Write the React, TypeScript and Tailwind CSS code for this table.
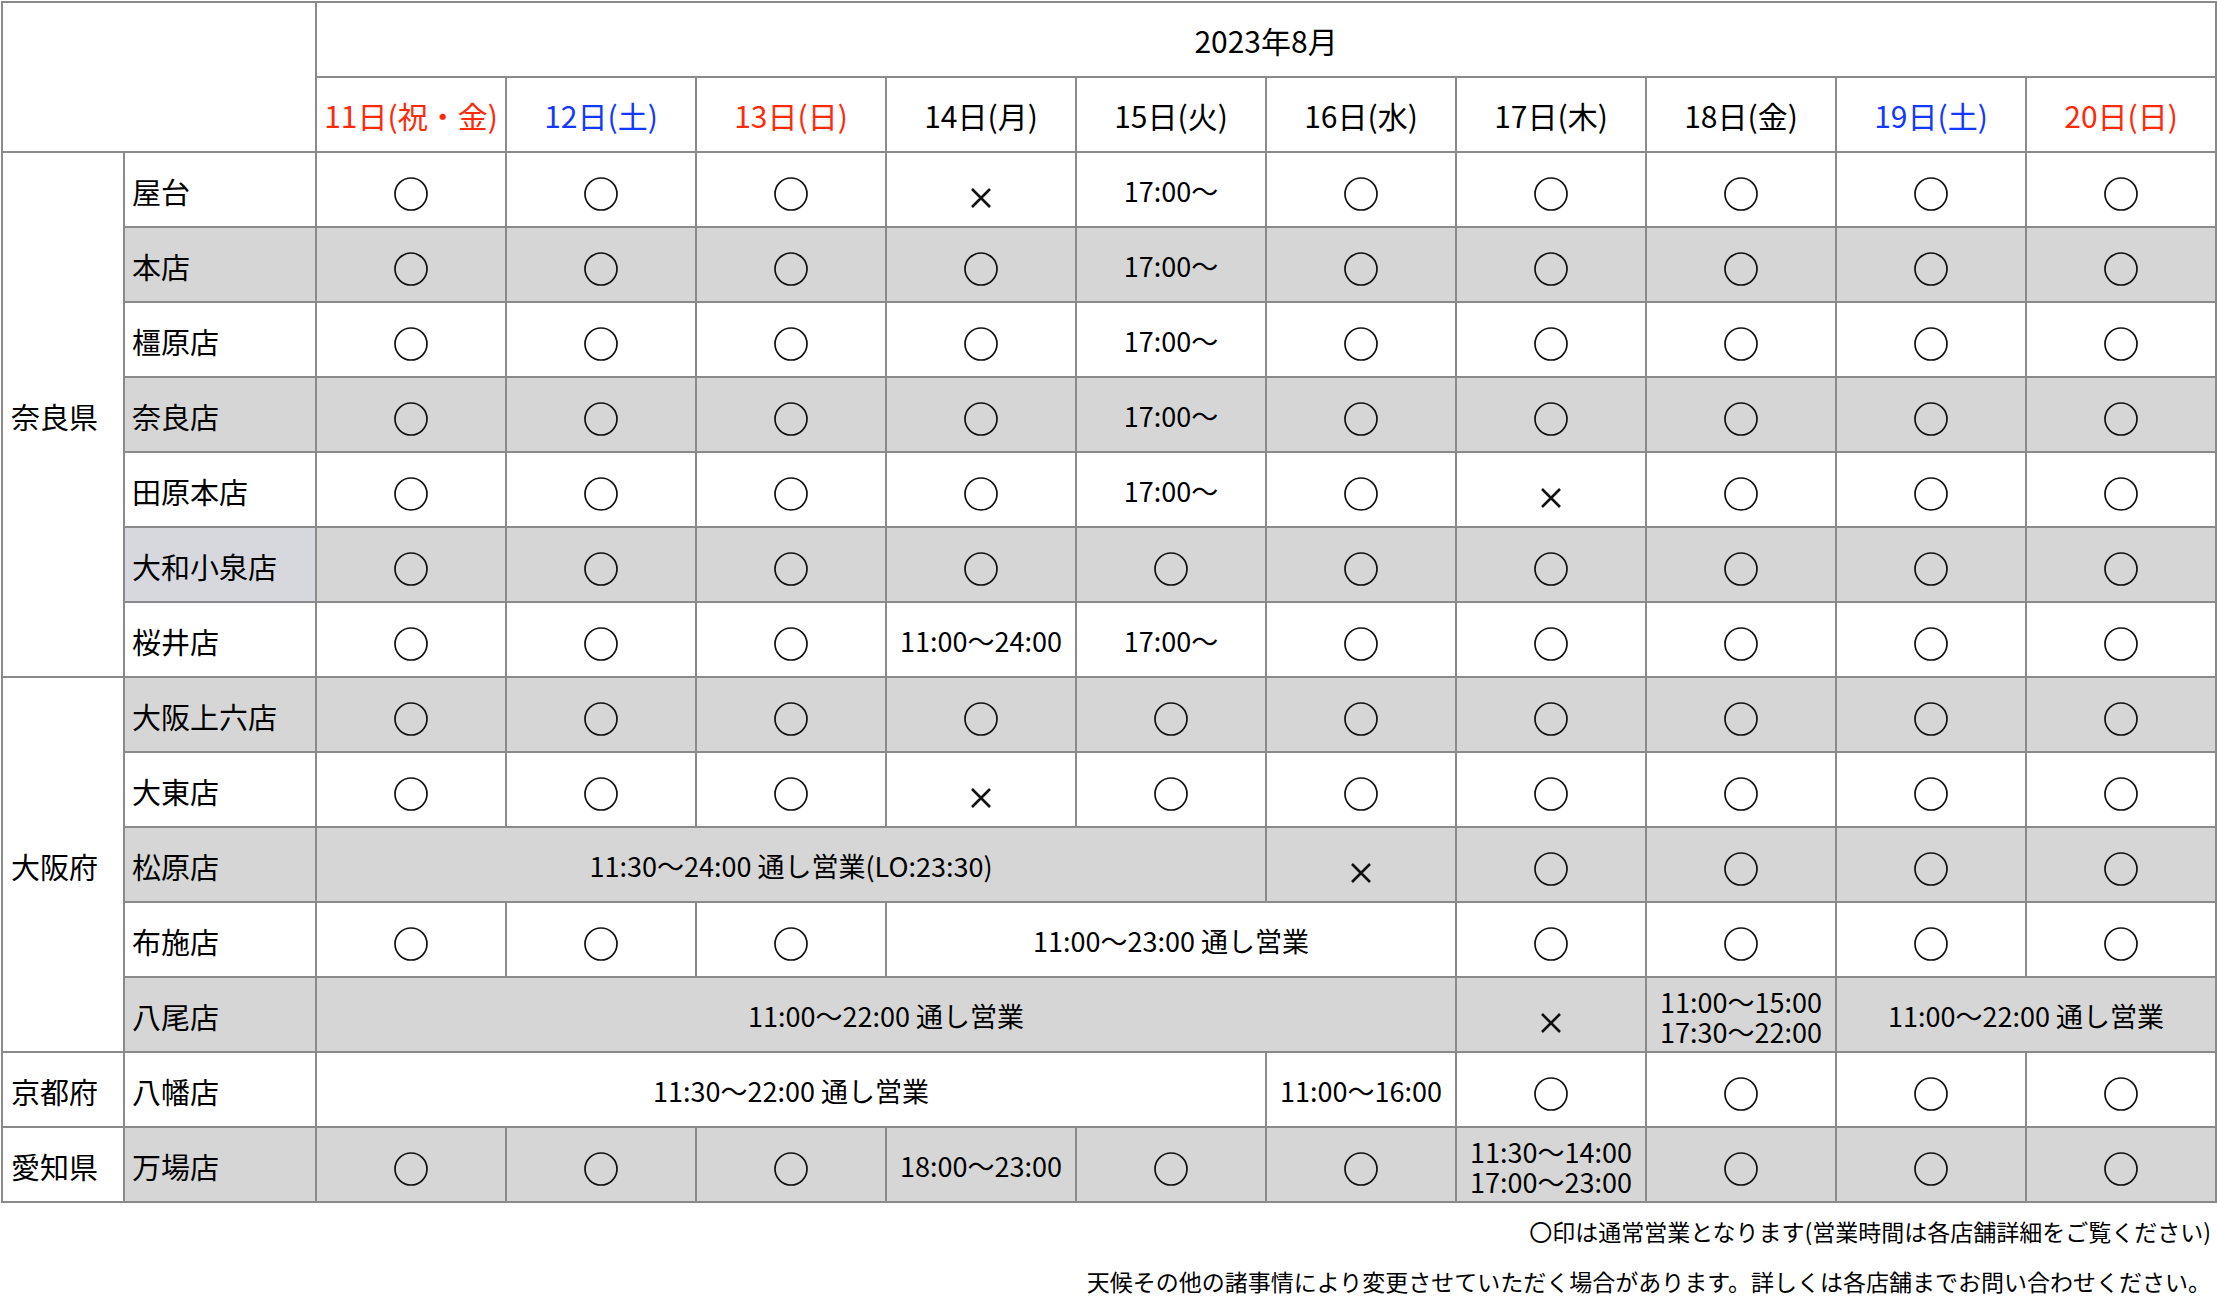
import React from "react";

type Cell = "O" | "X" | { t: string[]; span?: number };

const days: { label: string; color: string }[] = [
  { label: "11日(祝・金)", color: "text-[#ff2a0a]" },
  { label: "12日(土)", color: "text-[#1438ff]" },
  { label: "13日(日)", color: "text-[#ff2a0a]" },
  { label: "14日(月)", color: "text-black" },
  { label: "15日(火)", color: "text-black" },
  { label: "16日(水)", color: "text-black" },
  { label: "17日(木)", color: "text-black" },
  { label: "18日(金)", color: "text-black" },
  { label: "19日(土)", color: "text-[#1438ff]" },
  { label: "20日(日)", color: "text-[#ff2a0a]" },
];

const T = (s: string, span?: number): Cell => ({ t: s.split("\n"), span });
const O: Cell = "O";
const X: Cell = "X";

type Row = { pref?: { name: string; span: number }; store: string; cells: Cell[]; storeBg?: string };

const rows: Row[] = [
  { pref: { name: "奈良県", span: 7 }, store: "屋台", cells: [O, O, O, X, T("17:00～"), O, O, O, O, O] },
  { store: "本店", cells: [O, O, O, O, T("17:00～"), O, O, O, O, O] },
  { store: "橿原店", cells: [O, O, O, O, T("17:00～"), O, O, O, O, O] },
  { store: "奈良店", cells: [O, O, O, O, T("17:00～"), O, O, O, O, O] },
  { store: "田原本店", cells: [O, O, O, O, T("17:00～"), O, X, O, O, O] },
  { store: "大和小泉店", cells: [O, O, O, O, O, O, O, O, O, O], storeBg: "bg-[#d7d8dd]" },
  { store: "桜井店", cells: [O, O, O, T("11:00～24:00"), T("17:00～"), O, O, O, O, O] },
  { pref: { name: "大阪府", span: 5 }, store: "大阪上六店", cells: [O, O, O, O, O, O, O, O, O, O] },
  { store: "大東店", cells: [O, O, O, X, O, O, O, O, O, O] },
  { store: "松原店", cells: [T("11:30～24:00 通し営業(LO:23:30)", 5), X, O, O, O, O] },
  { store: "布施店", cells: [O, O, O, T("11:00～23:00 通し営業", 3), O, O, O, O] },
  {
    store: "八尾店",
    cells: [T("11:00～22:00 通し営業", 6), X, T("11:00～15:00\n17:30～22:00"), T("11:00～22:00 通し営業", 2)],
  },
  { pref: { name: "京都府", span: 1 }, store: "八幡店", cells: [T("11:30～22:00 通し営業", 5), T("11:00～16:00"), O, O, O, O] },
  {
    pref: { name: "愛知県", span: 1 },
    store: "万場店",
    cells: [O, O, O, T("18:00～23:00"), O, O, T("11:30～14:00\n17:00～23:00"), O, O, O],
  },
];

const bd = "border-2 border-[#8a8a8a]";

function Circle() {
  return (
    <svg width="34" height="34" viewBox="0 0 34 34" className="block mx-auto mt-[8px]">
      <circle cx="17" cy="17" r="16" fill="none" stroke="#111" strokeWidth="1.7" />
    </svg>
  );
}

function Cross() {
  return (
    <svg width="22" height="22" viewBox="0 0 22 22" className="block mx-auto mt-[16px]">
      <path d="M2 2 L20 20 M20 2 L2 20" stroke="#111" strokeWidth="2.6" strokeLinecap="butt" />
    </svg>
  );
}

export default function App() {
  return (
    <div
      className="bg-white text-black w-[2217px] min-h-[1303px]"
      style={{ fontFamily: '"Noto Sans CJK JP", "Noto Sans", sans-serif' }}
    >
      <div className="pt-[1px] pl-[1px]">
        <table className="table-fixed border-collapse w-[2214px] text-[28px]">
          <colgroup>
            <col className="w-[122px]" />
            <col className="w-[192px]" />
            {days.map((_, i) => (
              <col key={i} className="w-[190px]" />
            ))}
          </colgroup>
          <thead>
            <tr className="h-[75px]">
              <th colSpan={2} rowSpan={2} className={`${bd} bg-white`} />
              <th colSpan={10} className={`${bd} font-normal text-[30px] text-center align-middle pt-[2px]`}>
                2023年8月
              </th>
            </tr>
            <tr className="h-[75px]">
              {days.map((d, i) => (
                <th
                  key={i}
                  className={`${bd} font-normal text-[30px] text-center align-middle whitespace-nowrap pt-[2px] ${d.color}`}
                >
                  {d.label}
                </th>
              ))}
            </tr>
          </thead>
          <tbody>
            {rows.map((r, ri) => {
              const gray = ri % 2 === 1;
              const rowBg = gray ? "bg-[#d6d6d6]" : "bg-white";
              return (
                <tr key={ri} className="h-[75px]">
                  {r.pref && (
                    <td
                      rowSpan={r.pref.span}
                      className={`${bd} bg-white text-left align-middle pl-[8px] pt-[4px] whitespace-nowrap text-[29px]`}
                    >
                      {r.pref.name}
                    </td>
                  )}
                  <td
                    className={`${bd} ${r.storeBg ?? rowBg} text-left align-middle pl-[7px] pt-[4px] whitespace-nowrap text-[29px]`}
                  >
                    {r.store}
                  </td>
                  {r.cells.map((c, ci) => {
                    if (c === "O")
                      return (
                        <td key={ci} className={`${bd} ${rowBg} align-middle p-0`}>
                          <Circle />
                        </td>
                      );
                    if (c === "X")
                      return (
                        <td key={ci} className={`${bd} ${rowBg} align-middle p-0`}>
                          <Cross />
                        </td>
                      );
                    return (
                      <td
                        key={ci}
                        colSpan={c.span ?? 1}
                        className={`${bd} ${rowBg} align-middle text-center px-0 whitespace-nowrap text-[27px] ${
                          c.t.length > 1 ? "leading-[30px] pt-[5px] pb-0" : "leading-[34px] pt-[3px] pb-0"
                        }`}
                      >
                        <span>
                          {c.t.map((line, li) => (
                            <React.Fragment key={li}>
                              {li > 0 && <br />}
                              {line}
                            </React.Fragment>
                          ))}
                        </span>
                      </td>
                    );
                  })}
                </tr>
              );
            })}
          </tbody>
        </table>
        <div className="w-[2214px] text-right text-[23px] leading-[34px] pt-[11px] pr-[4px] flex flex-col gap-[16px]">
          <div>〇印は通常営業となります(営業時間は各店舗詳細をご覧ください)</div>
          <div>天候その他の諸事情により変更させていただく場合があります。詳しくは各店舗までお問い合わせください。</div>
        </div>
      </div>
    </div>
  );
}
